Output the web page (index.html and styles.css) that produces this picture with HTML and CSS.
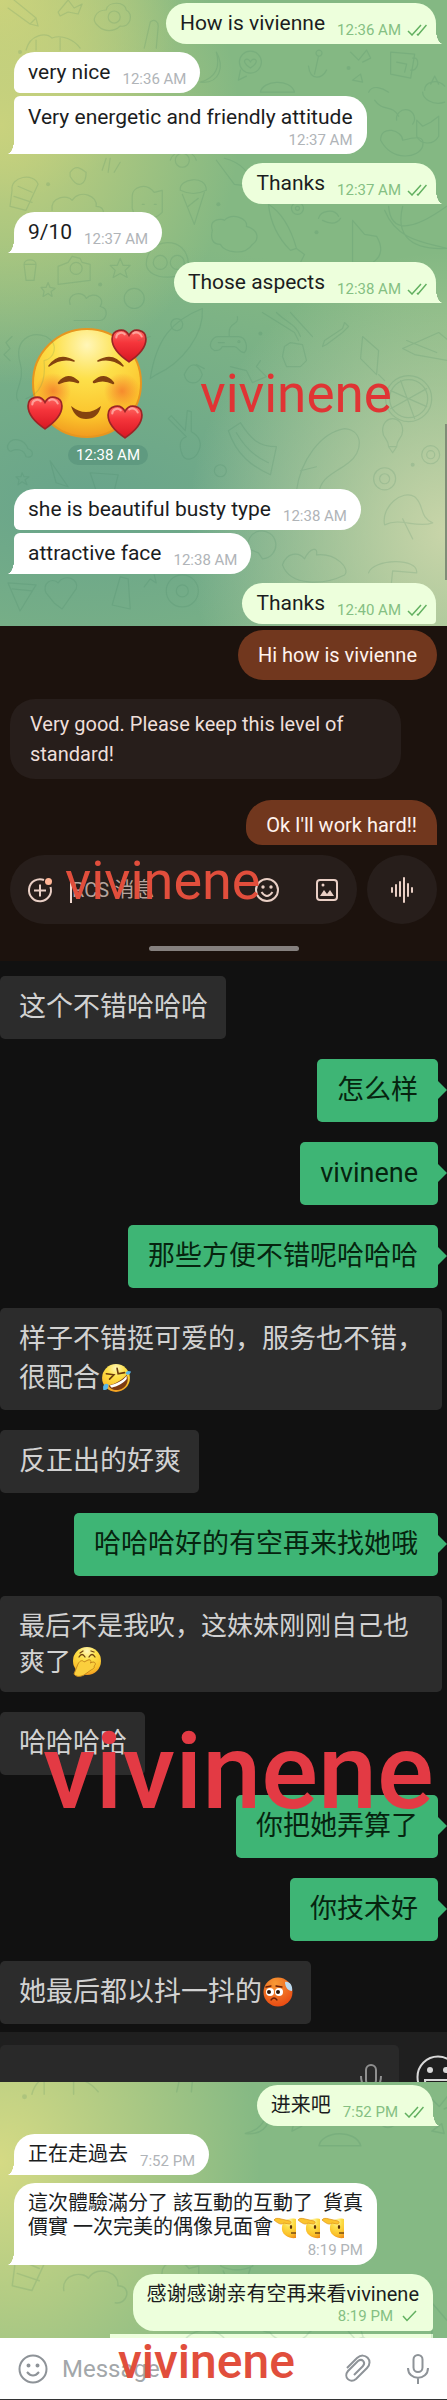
FILE: index.html
```
<!DOCTYPE html>
<html lang="zh">
<head>
  <meta charset="UTF-8">
  <meta name="viewport" content="width=device-width, initial-scale=1.0">
  <title>vivinene</title>
  <link rel="stylesheet" href="styles.css">
</head>
<body>
  <svg class="defs" aria-hidden="true">
    <defs>
      <radialGradient id="skin" cx="0.5" cy="0.15" r="0.9">
        <stop offset="0" stop-color="#fff6b8"/>
        <stop offset="0.35" stop-color="#fde04a"/>
        <stop offset="0.75" stop-color="#fbc22b"/>
        <stop offset="1" stop-color="#ee8f1c"/>
      </radialGradient>
      <radialGradient id="hot" cx="0.4" cy="0.2" r="0.9">
        <stop offset="0" stop-color="#f79a35"/>
        <stop offset="1" stop-color="#e8420f"/>
      </radialGradient>
      <radialGradient id="blush">
        <stop offset="0" stop-color="#f4742a" stop-opacity="0.75"/>
        <stop offset="1" stop-color="#f4742a" stop-opacity="0"/>
      </radialGradient>
      <linearGradient id="red" x1="0" y1="0" x2="0" y2="1">
        <stop offset="0" stop-color="#ff6a62"/>
        <stop offset="0.4" stop-color="#f5353b"/>
        <stop offset="1" stop-color="#d81622"/>
      </linearGradient>
    </defs>
    <symbol id="read" viewBox="0 0 20 12">
      <path d="M1 7l4 4L14 1M10 10l1 1L19.500 1" fill="none" stroke="currentColor" stroke-width="1.500"/>
    </symbol>
    <symbol id="sent" viewBox="0 0 20 12">
      <path d="M4 6l4 4.500L17 1" fill="none" stroke="currentColor" stroke-width="1.500"/>
    </symbol>
    <symbol id="heart" viewBox="0 0 34 34">
      <path d="M17 32C8 26 1 19 1 10.500C1 1 13-1 17 7C21-1 33 1 33 10.500C33 19 26 26 17 32Z" fill="url(#red)" stroke="#9c2426" stroke-width="1.600"/>
      <path d="M5 9c0-4 5-6 8-3M21 5c3-2 7 0 8 3" fill="none" stroke="#ffc1b8" stroke-width="2" stroke-linecap="round" opacity="0.7"/>
    </symbol>
    <symbol id="rofl" viewBox="0 0 28 28">
      <circle cx="14" cy="14" r="13" fill="url(#skin)"/>
      <path d="M5 10l7 1-4 4M15 5l1 5 6-1" fill="none" stroke="#6b3b0c" stroke-width="1.500" stroke-linecap="round"/>
      <path d="M7 21C13 20 21 15 24 11C27 17 23 24 17 25C12 26 8 24 7 21Z" fill="#7c3a12"/>
      <path d="M8 21c6-1 13-5 16-9v3c-3 4-9 7-14 8z" fill="#fff"/>
      <path d="M2 22c1-3 3-3 5-2 0 4-2 6-5 5zM23 10c0-3 3-3 5-2-1 3-3 4-5 2z" fill="#58b7e8"/>
    </symbol>
    <symbol id="giggle" viewBox="0 0 30 30">
      <circle cx="15" cy="14" r="14" fill="url(#skin)"/>
      <path d="M7 10q3-5 6 0M17 10q3-5 6 0M8 6l3-2M19 4l3 1" fill="none" stroke="#70420f" stroke-width="1.300" stroke-linecap="round"/>
      <path d="M2 27l4-10c2-4 5-4 6-2l4-2c3-1 4 2 2 3l3-1c3 0 3 3 1 4 1 2-1 3-3 4l-7 5c-4 2-8 2-10-1z" fill="#fbcf3d" stroke="#c8891c" stroke-width="1"/>
    </symbol>
    <symbol id="sick" viewBox="0 0 30 30">
      <circle cx="15" cy="15" r="14.500" fill="url(#hot)"/>
      <circle cx="7" cy="15" r="4" fill="#fff"/><circle cx="16" cy="15" r="4" fill="#fff"/>
      <circle cx="6" cy="15" r="2" fill="#2a1408"/><circle cx="15" cy="15" r="2" fill="#2a1408"/>
      <path d="M8 23q3-4 6 0M3 10l5-1M13 9l6 1" fill="none" stroke="#6b1f05" stroke-width="1.300" stroke-linecap="round"/>
      <path d="M22 5c4-1 8 3 7 9-4 0-7-4-7-9z" fill="#b9d8ee"/>
    </symbol>
    <symbol id="salute" viewBox="0 0 24 24">
      <path d="M23 3C14 1 8 6 9 14C10 19 16 23 23 22Z" fill="url(#skin)"/>
      <path d="M1 4c1-2 4-2 7-1l9 2c2 1 1 3-1 3l-5-1c-3 2-5 1-10-3z" fill="#fbc42e" stroke="#e29a1d" stroke-width="0.800"/>
      <ellipse cx="18" cy="11" rx="1.200" ry="2" fill="#59300c"/>
      <path d="M18 17h5" stroke="#59300c" stroke-width="1.200"/>
    </symbol>
    <symbol id="doodles" viewBox="0 0 447 625">
      <g fill="none" stroke="#3f7f5f" stroke-width="1.200" stroke-linejoin="round" stroke-linecap="round">
        <path d="M8 8l22 16 6-6L14 0M30 24l8 2-2-8"/>
        <path d="M58 12l10-12 6 8 8-4-4 10-10-2-8 4z"/>
        <path d="M98 26c-8-6-2-16 8-16 2-10 20-8 20 0 8 4 4 18-6 16-6 6-16 6-22 0z"/><circle cx="114" cy="17" r="6"/>
        <path d="M26 50c4-16 20-18 26-12 10-4 22 2 28 10M36 40v10M60 38v12M144 48l6-26c4-4 8 0 8 4l-2 22"/>
        <path d="M200 82c16-4 20-16 16-30 8 14 4 32-16 30z"/>
        <circle cx="250" cy="62" r="11"/><path d="M250 68c-12-8-2-12 0-6 2-6 12-2 0 6zM240 70l-2 10 8-4"/>
        <path d="M318 56l-4 18M308 66c2 16 14 12 18 4M318 56a3 3 0 1 1 1 0"/>
        <path d="M350 52l8 8 8-10 4 8-8 4M352 80l8-6 2 8z"/>
        <path d="M390 52l24 2-4 24-20-4zM412 58c8-2 6 14-2 12M396 62l10 2-2 8"/>
        <path d="M424 90c0-8 12-12 20-4M422 92c0 6 10 14 22 10M430 84l4-8 4 8"/>
        <path d="M260 92c2-12 30-14 34 0zM368 92c4-8 14-4 20 0M374 100c8 12 18 4 24 16"/>
        <path d="M380 140c0-16 22-10 22 0 16-4 22-4 20 6-4 12-30 16-42-6zM396 120a9 9 0 1 1 16 4"/>
        <path d="M416 120l6 6 8-4 8-6v20c-6 10-18 8-22 0z"/>
        <path d="M70 172c6-8 10-4 16 0 0 12-8 18-16 4zM102 170l4-12M108 172l2-14M114 172l6-10"/>
        <circle cx="182" cy="160" r="7"/><path d="M170 160c4-12 22-12 26 0"/>
        <path d="M12 190c-2-14 22-18 26-6l-12 26-16-4zM14 196l18 6M18 186l14 6"/>
        <path d="M52 210c-2-14 16-16 20-10 8-12 26-4 24 6 12 0 8 16-2 14"/>
        <path d="M132 196c0-10 14-14 22-4l8-2v22c-10 10-28 8-30-4zM142 204h2M154 204h2"/>
        <path d="M180 190c-2-12 26-16 26 0-8 4-18 4-26 0zM182 194l12 30 10-32M188 206l10-8"/>
        <path d="M216 160l18 24 16 2M224 158c16 4 26 14 30 30"/>
        <path d="M212 230c-4-12 10-12 12-10 8-8 24-2 22 6 14 4 12 14 6 18-8 12-28 8-32 0-8 0-10-6-8-14z"/>
        <path d="M268 204c16 10 24 30 28 44l-6 2c-12-12-20-28-22-46zM296 248l8 6-4 8"/>
        <circle cx="297" cy="208" r="6"/><circle cx="297" cy="208" r="2"/>
        <path d="M318 218c2-8 16-10 20-2M322 220c8 4 14 4 18-2"/>
        <path d="M352 262V220l12 14 12 2c6 10 6 20-4 26zM384 210c12 30 40 32 62 38M388 206c2 26 22 26 58 0M402 206c-6 24 2 44 44 42"/>
        <path d="M24 264h12l-2 16h-8zM24 264c0-6 12-6 12 0M58 266l10-4 4-6 8 2 2 4 8 2v16l-32 4z"/><circle cx="76" cy="268" r="6"/>
        <path d="M120 258l3 7h7l-5 5 2 7-7-4-7 4 2-7-5-5h7zM48 282l2 5 5 1-4 3 1 5-4-3-5 3 1-5-3-4h5z"/>
        <path d="M146 264c0-28 42-30 42 0 0 16-40 18-42 0z"/><circle cx="160" cy="262" r="7"/><circle cx="177" cy="262" r="7"/>
        <path d="M70 304c-4-12 14-14 16-6 8-8 20 0 14 8 10 2 6 14 0 14H74"/><circle cx="134" cy="298" r="10"/>
        <path d="M18 400c-6-8 8-20 2-38-6-22 10-32 26-26 14 8 8 22-2 24 2 20-4 34-18 38M12 336l-6 6 4 6-6 6 6 6"/>
        <path d="M150 378c6-40 22-58 52-70 2 26-20 54-46 66zM138 340l12-4M176 330a6 6 0 1 1 1 0"/>
        <path d="M214 350c-8-4-2-14 4-14h20c8 0 10 12 6 16-6 0-6-6-10-6h-12c-2 4-4 4-8 4zM229 336c-2-16 10-10 8-20M218 342h6M238 342a1 1 0 1 1 1 0"/>
        <path d="M262 312l32 20 4 8M276 312c10 10 20 12 24 24M290 312l22 24"/>
        <path d="M284 346l6-4 12 2 4 16-6 6h-14l-4-10zM324 340l18-12 2-6 4 4-6 6-16 12-4 2z"/>
        <path d="M362 336l16 14-2 24-16-16zM378 374l6 6M402 348l36-16 10 8v20l-34-6zM406 340l30 12"/>
        <path d="M184 374c6-14 14-12 18 0-4 12-16 10-18 0zM204 368l-8-4M230 366l16 4 6 12 14-6-10-10 4-6"/>
        <circle cx="408" cy="398" r="23"/><circle cx="408" cy="398" r="19"/><path d="M390 390l36 16M400 380l14 38M426 388l-36 20"/>
        <path d="M8 444c4-8 16-6 20 4 6 2 6 10-2 8-2-8-10-8-14-6-2 2-6-2-4-6z"/>
        <path d="M182 454c-4-10-2-16 4-18l-18-18 3-3 14 15 2-20 4 1v20c8 4 12 12 6 22-4 6-12 8-15 1z"/>
        <path d="M228 430l12-8c10 16 18 24 36 24l-6 28c-18-8-34-20-42-44zM236 432c8 14 18 24 32 30"/>
        <path d="M296 490c4-30 24-58 48-62 20 2 18 24 4 34-16 12-28 14-30 32M300 470l16-4"/>
        <path d="M382 430c0-16 20-16 20 0 0 8-6 8-6 16h-8c0-8-6-8-6-16zM388 446l4 6 4-6"/>
        <circle cx="430" cy="454" r="9"/><circle cx="430" cy="454" r="4"/><circle cx="384" cy="478" r="11"/><circle cx="384" cy="478" r="5"/>
        <path d="M384 524c-4-18 18-36 30-28 10 8 4 20 18 26-16 6-32-6-48 2zM402 518l10 20M90 472l28 2-4 16H96zM50 460l18 26-12-4z"/>
        <path d="M22 472l2 4h5l-4 3 2 5-5-3-4 3 1-5-3-3h5z"/><circle cx="220" cy="470" r="6"/>
        <path d="M282 564c4-12 16-14 22-6 6-12 14-12 12-4 20-2 34 14 28 20-20 10-54 12-62-10z"/>
        <path d="M8 582l28 2-16 26zM12 588l20 2M46 592c-4-10 6-16 12-10 6-10 22-4 18 6l-14 20-8-6z"/>
        <circle cx="182" cy="590" r="16"/><circle cx="182" cy="590" r="6"/><path d="M112 604l8-28 8 2 2 30zM144 586l6-8 6 4-2-8"/>
        <path d="M368 572c4-14 50-16 48 0l-24-2-4 40M248 548a14 14 0 1 1 14 10l-4-6z"/>
      </g>
      <g fill="#3f7f5f">
        <circle cx="20" cy="52" r="2"/><circle cx="48" cy="184" r="2"/><circle cx="316" cy="232" r="2"/><circle cx="100" cy="284" r="2"/><circle cx="260" cy="333" r="2"/><circle cx="348" cy="68" r="2"/><circle cx="218" cy="204" r="2"/><circle cx="412" cy="464" r="2"/>
      </g>
    </symbol>
  </svg>

  <section class="telegram first">
    <svg class="doodles" viewBox="0 0 447 625" preserveAspectRatio="xMinYMin slice" aria-hidden="true"><use href="#doodles"/></svg>
    <div class="bubble out tail">How is vivienne <span class="time">12:36 AM <svg><use href="#read"/></svg></span></div>
    <div class="bubble in joined">very nice <span class="time">12:36 AM</span></div>
    <div class="bubble in stacked tail follow">Very energetic and friendly attitude <span class="time">12:37 AM</span></div>
    <div class="bubble out tail">Thanks <span class="time">12:37 AM <svg><use href="#read"/></svg></span></div>
    <div class="bubble in tail">9/10 <span class="time">12:37 AM</span></div>
    <div class="bubble out tail">Those aspects <span class="time">12:38 AM <svg><use href="#read"/></svg></span></div>
    <div class="sticker">
      <svg viewBox="0 0 120 112" role="img" aria-label="🥰">
        <circle cx="60" cy="55" r="54" fill="url(#skin)" stroke="#e7961f" stroke-width="2"/>
        <circle cx="26" cy="63" r="18" fill="url(#blush)"/><circle cx="95" cy="63" r="18" fill="url(#blush)"/>
        <path d="M22 38q10-14 25-5q-13-4-25 5zM71 33q15-9 25 5q-12-9-25-5z" fill="#84430f" stroke="#84430f" stroke-width="1.500" stroke-linejoin="round"/>
        <path d="M32 55q9-11 19-1q-10-4-19 1zM67 54q10-10 19 1q-9-5-19-1z" fill="#84430f" stroke="#84430f" stroke-width="2.500" stroke-linejoin="round"/>
        <path d="M44 78q15 12 30 0q-3 13-15 13q-11 0-15-13z" fill="#84430f"/>
        <use href="#heart" x="84" y="0" width="36" height="36"/>
        <use href="#heart" x="0" y="67" width="36" height="36"/>
        <use href="#heart" x="80" y="76" width="36" height="36"/>
      </svg>
      <span class="time">12:38 AM</span>
    </div>
    <div class="bubble in joined">she is beautiful busty type <span class="time">12:38 AM</span></div>
    <div class="bubble in tail follow">attractive face <span class="time">12:38 AM</span></div>
    <div class="bubble out">Thanks <span class="time">12:40 AM <svg><use href="#read"/></svg></span></div>
    <span class="scrollbar"></span>
    <strong class="mark mark-one">vivinene</strong>
  </section>

  <section class="messages">
    <div class="rcs sent">Hi how is vivienne</div>
    <div class="rcs received">Very good. Please keep this level of standard!</div>
    <div class="rcs sent cut">Ok I'll work hard!!</div>
    <form class="compose">
      <div class="pill">
        <button type="button" aria-label="Add">
          <svg viewBox="0 0 28 28"><path d="M18 4A11 11 0 1 0 24.500 11M14 8.500v12M8 14.500h12" fill="none" stroke="#e9cfc5" stroke-width="2"/><circle cx="22.500" cy="5.500" r="3.500" fill="#ffb596"/></svg>
        </button>
        <input type="text" aria-label="RCS 消息" placeholder="RCS 消息">
        <button type="button" aria-label="Emoji">
          <svg viewBox="0 0 28 28"><circle cx="14" cy="14" r="11" fill="none" stroke="#e9cfc5" stroke-width="2"/><circle cx="10" cy="11" r="1.700" fill="#e9cfc5"/><circle cx="18" cy="11" r="1.700" fill="#e9cfc5"/><path d="M8.500 16q5.500 8 11 0" fill="none" stroke="#e9cfc5" stroke-width="2"/></svg>
        </button>
        <button type="button" aria-label="Gallery">
          <svg viewBox="0 0 28 28"><rect x="4" y="4" width="20" height="20" rx="3" fill="none" stroke="#e9cfc5" stroke-width="2"/><path d="M7 20l4-6 3 4 3-4 4 6z" fill="#e9cfc5"/><circle cx="10" cy="9" r="1.500" fill="#e9cfc5"/></svg>
        </button>
      </div>
      <button type="button" class="voice" aria-label="Voice">
        <svg viewBox="0 0 28 28"><path d="M4 12v4M8 9v11M12 6v14M16 2v24M20 8v12M24 12v4" stroke="#e9cfc5" stroke-width="2" stroke-linecap="round"/></svg>
      </button>
    </form>
    <span class="handle"></span>
    <strong class="mark mark-two">vivinene</strong>
  </section>

  <section class="wechat">
    <div class="talk">
      <p class="them">这个不错哈哈哈</p>
      <p class="me">怎么样</p>
      <p class="me">vivinene</p>
      <p class="me">那些方便不错呢哈哈哈</p>
      <p class="them">样子不错挺可爱的，服务也不错，很配合<svg class="emoji" role="img" aria-label="🤣"><use href="#rofl"/></svg></p>
      <p class="them">反正出的好爽</p>
      <p class="me">哈哈哈好的有空再来找她哦</p>
      <p class="them dense">最后不是我吹，这妹妹刚刚自己也爽了<svg class="emoji" role="img" aria-label="🤭"><use href="#giggle"/></svg></p>
      <p class="them">哈哈哈哈</p>
      <p class="me">你把她弄算了</p>
      <p class="me">你技术好</p>
      <p class="them">她最后都以抖一抖的<svg class="emoji" role="img" aria-label="😳"><use href="#sick"/></svg></p>
      <strong class="mark mark-three">vivinene</strong>
    </div>
    <form class="bar">
      <div class="field">
        <input type="text" aria-label="Message">
        <button type="button" aria-label="Voice input">
          <svg viewBox="0 0 24 36"><rect x="7" y="2" width="10" height="20" rx="5"/><path d="M2 13c0 18 20 18 20 0M12 27v7"/></svg>
        </button>
      </div>
      <button type="button" class="smile" aria-label="Emoji">
        <svg viewBox="0 0 44 44"><circle cx="22" cy="22" r="20.500" fill="none" stroke="#d8d8d8" stroke-width="2"/><circle cx="14" cy="15" r="3" fill="#d8d8d8"/><circle cx="30" cy="15" r="3" fill="#d8d8d8"/><path d="M9 25h26c0 14-26 14-26 0z" fill="none" stroke="#d8d8d8" stroke-width="2"/></svg>
      </button>
    </form>
  </section>

  <section class="telegram last">
    <svg class="doodles" viewBox="0 40 447 260" preserveAspectRatio="xMinYMin slice" aria-hidden="true"><use href="#doodles" width="447" height="625"/></svg>
    <div class="bubble out tail">进来吧 <span class="time">7:52 PM <svg><use href="#read"/></svg></span></div>
    <div class="bubble in tail">正在走過去 <span class="time">7:52 PM</span></div>
    <div class="bubble in stacked tail">
      <span>這次體驗滿分了 該互動的互動了&nbsp; 貨真<br>價實 一次完美的偶像見面會<svg class="emoji" role="img" aria-label="🫡"><use href="#salute"/></svg><svg class="emoji" role="img" aria-label="🫡"><use href="#salute"/></svg><svg class="emoji" role="img" aria-label="🫡"><use href="#salute"/></svg></span>
      <span class="time">8:19 PM</span>
    </div>
    <div class="bubble out stacked">感谢感谢亲有空再来看vivinene <span class="time">8:19 PM <svg><use href="#sent"/></svg></span></div>
    <div class="peek"></div>
    <form class="input-row">
      <button type="button" aria-label="Emoji">
        <svg viewBox="0 0 30 30"><circle cx="15" cy="15" r="13.500"/><path d="M9 18q6 7 12 0"/><circle cx="10.500" cy="11.500" r="1" fill="#8e9398"/><circle cx="19.500" cy="11.500" r="1" fill="#8e9398"/></svg>
      </button>
      <input type="text" aria-label="Message" placeholder="Message">
      <button type="button" aria-label="Attach">
        <svg viewBox="0 0 30 30"><path d="M4 14L14 4c8-7 17 3 10 10L13 25c-6 5-13-2-8-8l10-10c4-3 8 1 5 5l-9 9"/></svg>
      </button>
      <button type="button" class="mic" aria-label="Voice message">
        <svg viewBox="0 0 30 30"><rect x="10.500" y="1" width="9" height="17" rx="4.500"/><path d="M5 14c0 13 20 13 20 0M15 24v6"/></svg>
      </button>
    </form>
    <strong class="mark mark-four">vivinene</strong>
  </section>
</body>
</html>
```
FILE: styles.css
```
* {
  box-sizing: border-box;
}

body {
  margin: 0;
  background: #111;
  font-family: Roboto, "Noto Sans CJK SC", sans-serif;
}

button,
input {
  font: inherit;
  padding: 0;
  border: none;
  background: none;
  outline: none;
}

input {
  flex: 1;
  min-width: 0;
}

button {
  display: flex;
}

section {
  position: relative;
  overflow: hidden;
}

.defs {
  position: absolute;
  width: 0;
  height: 0;
}

.mark {
  position: absolute;
  font-weight: 400;
  line-height: 1;
  color: #e03434;
}

/* Telegram */
.telegram {
  display: flex;
  flex-direction: column;
  align-items: flex-start;
  gap: 8px;
  padding: 3px 11px 0 14px;
}

.first {
  padding-bottom: 2px;
  background:
    radial-gradient(ellipse 240px 260px at 0 20%, #c9d27d, transparent),
    radial-gradient(ellipse 180px 200px at 0 0, #cdd37a, transparent),
    radial-gradient(ellipse 260px 280px at 100% 85%, #c9d5a9, transparent),
    radial-gradient(ellipse 500px 260px at 20% 80%, #68a48b, transparent),
    #84b883;
}

.last {
  padding-right: 14px;
  background:
    radial-gradient(ellipse 260px 320px at 0 25%, #d5da84, transparent),
    #85b984;
}

.doodles {
  position: absolute;
  inset: 0;
  width: 100%;
  height: 100%;
  opacity: 0.16;
}

.bubble {
  position: relative;
  display: flex;
  align-items: center;
  gap: 12px;
  padding: 0 14px;
  border-radius: 21px;
  font-size: 21px;
  line-height: 41px;
  color: #1b1d1e;
}

.last .bubble {
  font-size: 20px;
}

.in {
  background: #fff;
  --fill: #fff;
}

.out {
  align-self: flex-end;
  padding-right: 9px;
  background: #edffdc;
  --fill: #edffdc;
  border-bottom-right-radius: 4px;
}

.in + .out {
  margin-top: 1px;
}

.joined {
  border-radius: 21px 21px 21px 6px;
}

.follow {
  margin-top: -5px;
  border-top-left-radius: 6px;
}

.stacked {
  flex-direction: column;
  align-items: flex-end;
  gap: 0;
  padding: 8px 14px 4px;
  line-height: 26px;
}

.tail::after {
  content: "";
  position: absolute;
  bottom: 0;
  width: 7px;
  height: 14px;
}

.in.tail {
  border-bottom-left-radius: 0;
}

.in.tail::after {
  right: 100%;
  background: radial-gradient(ellipse 7px 14px at 0 0, transparent 98%, var(--fill));
}

.out.tail {
  border-bottom-right-radius: 0;
}

.out.tail::after {
  left: 100%;
  background: radial-gradient(ellipse 7px 14px at 100% 0, transparent 98%, var(--fill));
}

.bubble .time,
.time {
  display: flex;
  align-items: center;
  gap: 6px;
  padding-top: 12px;
  font-size: 15px;
  line-height: 28px;
  color: #b0b4b8;
}

.out .time {
  color: #85bf83;
}

.time svg {
  width: 20px;
  height: 12px;
  color: #62b060;
}

.stacked .time {
  padding-top: 0;
  line-height: 20px;
}

.sticker {
  display: flex;
  flex-direction: column;
  align-items: center;
  gap: 5px;
  margin: 17px 0 16px 12px;
}

.sticker svg {
  width: 122px;
  height: 112px;
}

.sticker .time {
  align-self: flex-end;
  padding: 0 8px;
  border-radius: 10px;
  background: #5f9a80;
  line-height: 20px;
  color: #fff;
}

.scrollbar {
  position: absolute;
  top: 424px;
  right: 0;
  width: 2px;
  height: 156px;
  background: #7e8d76;
}

.mark-one {
  top: 368px;
  left: 200px;
  font-size: 53px;
}

/* Messages */
.messages {
  display: flex;
  flex-direction: column;
  align-items: flex-start;
  padding: 4px 10px 10px;
  background: #1c120d;
}

.rcs {
  padding: 10px 20px;
  border-radius: 25px;
  font-size: 20px;
  line-height: 30px;
  color: #fff3ee;
}

.rcs.sent {
  align-self: flex-end;
  background: #71371e;
}

.received {
  max-width: 391px;
  margin: 19px 0 21px;
  background: #271e1b;
  color: #eedfda;
}

.rcs.cut {
  padding-bottom: 5px;
  border-radius: 25px 25px 0 16px;
}

.compose {
  display: flex;
  align-self: stretch;
  gap: 10px;
  margin-top: 10px;
}

.pill {
  flex: 1;
  display: flex;
  align-items: center;
  gap: 16px;
  min-width: 0;
  height: 69px;
  padding: 0 16px;
  border-radius: 35px;
  background: #271e1b;
}

.pill input {
  height: 26px;
  border-left: 2px solid #f0d9d0;
  font-size: 20px;
}

.pill input::placeholder {
  color: #b5a49d;
}

.pill button:last-child {
  margin-left: 16px;
}

.compose svg {
  width: 28px;
  height: 28px;
}

.voice {
  flex: none;
  align-items: center;
  justify-content: center;
  width: 70px;
  border-radius: 50%;
  background: #271e1b;
}

.handle {
  align-self: center;
  width: 150px;
  height: 5px;
  margin-top: 22px;
  border-radius: 3px;
  background: #85807e;
}

.mark-two {
  top: 228px;
  left: 65px;
  font-size: 54px;
  color: #e14e3c;
}

/* WeChat */
.talk {
  position: relative;
  display: flex;
  flex-direction: column;
  align-items: flex-start;
  gap: 20px;
  padding: 15px 0 8px;
  background: #111;
}

.talk p {
  position: relative;
  max-width: 442px;
  margin: 0;
  padding: 12px 18px 12px 19px;
  border-radius: 5px;
  font-size: 27px;
  line-height: 39px;
}

.them {
  background: #2c2c2c;
  color: #d2d2d2;
}

.talk .dense {
  font-size: 26px;
  line-height: 36px;
}

.talk .me {
  align-self: flex-end;
  margin-right: 9px;
  padding: 12px 20px;
  background: #3eb575;
  color: #06240f;
}

.me::after {
  content: "";
  position: absolute;
  left: 100%;
  top: 22px;
  border: 9px solid transparent;
  border-left-color: #3eb575;
}

.emoji {
  width: 30px;
  height: 30px;
  margin-left: 1px;
  vertical-align: -6px;
}

.mark-three {
  top: 758px;
  left: 43px;
  font-size: 106px;
  font-weight: 500;
  color: #e33a44;
}

.bar {
  display: flex;
  gap: 17px;
  height: 50px;
  overflow: hidden;
  padding-top: 13px;
  background: #1f1f1f;
}

.field {
  flex: 1;
  display: flex;
  height: 60px;
  padding: 18px 16px 0;
  border-radius: 5px;
  background: #292929;
}

.field svg {
  width: 24px;
  height: 36px;
  fill: none;
  stroke: #8f8f8f;
  stroke-width: 2;
}

.smile {
  width: 31px;
  margin-top: 10px;
}

.smile svg {
  flex: none;
  width: 44px;
  height: 44px;
}

/* Second Telegram chat */
.last .emoji {
  width: 24px;
  height: 24px;
  margin: 0;
}

.last .stacked {
  padding-bottom: 5px;
  line-height: 24px;
}

.peek {
  align-self: flex-end;
  width: 323px;
  height: 4px;
  margin-top: -5px;
  background: #edffdc;
}

.input-row {
  position: relative;
  align-self: stretch;
  display: flex;
  align-items: center;
  gap: 14px;
  height: 63px;
  margin: -8px -14px 0;
  padding: 0 14px 0 18px;
  border-bottom: 2px solid #333;
  background: #fff;
}

.input-row input {
  font-size: 24px;
}

.input-row input::placeholder {
  color: #a3a7aa;
}

.input-row svg {
  width: 30px;
  height: 30px;
  fill: none;
  stroke: #8e9398;
  stroke-width: 2;
}

.mic {
  margin-left: 16px;
}

.mark-four {
  left: 118px;
  bottom: 15px;
  font-size: 48px;
  font-weight: 500;
  color: #e14e3c;
}
```
